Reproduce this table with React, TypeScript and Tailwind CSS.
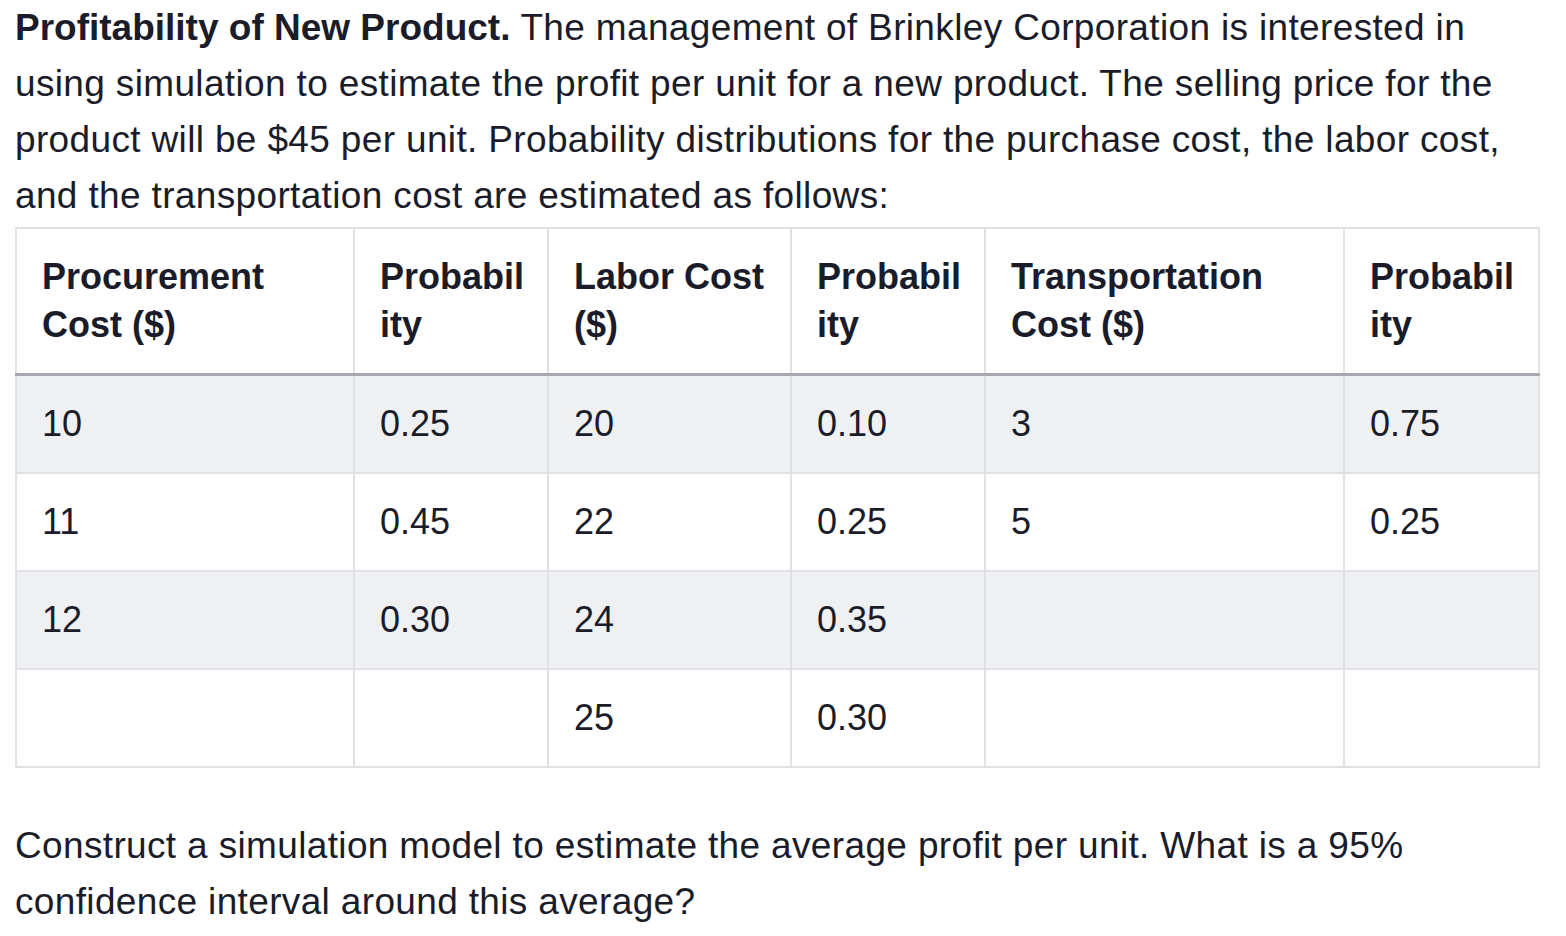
const headers = [
  ["Procurement", "Cost ($)"],
  ["Probabil", "ity"],
  ["Labor Cost", "($)"],
  ["Probabil", "ity"],
  ["Transportation", "Cost ($)"],
  ["Probabil", "ity"],
];

const rows = [
  ["10", "0.25", "20", "0.10", "3", "0.75"],
  ["11", "0.45", "22", "0.25", "5", "0.25"],
  ["12", "0.30", "24", "0.35", "", ""],
  ["", "", "25", "0.30", "", ""],
];

const colWidths = ["w-[338px]", "w-[194px]", "w-[243px]", "w-[194px]", "w-[359px]", "w-[195px]"];

export default function App() {
  return (
    <div className="min-h-screen bg-white px-[15px] text-[#1a1c29] font-['Liberation_Sans',Arial,sans-serif]">
      {/* Intro */}
      <p className="text-[37px] leading-[56px] tracking-[0.35px] w-[1520px]">
        <strong className="font-bold tracking-normal">Profitability of New Product.</strong> The management of
        Brinkley Corporation is interested in using simulation to estimate the profit per unit for a new product.
        The selling price for the product will be $45 per unit. Probability distributions for the purchase cost,
        the labor cost, and the transportation cost are estimated as follows:
      </p>

      {/* Table */}
      <table className="mt-[3px] w-[1523px] table-fixed border-collapse border-2 border-[#dfe1e4] text-[36px] leading-[48px]">
        <colgroup>
          {colWidths.map((w, i) => (
            <col key={i} className={w} />
          ))}
        </colgroup>
        <thead>
          <tr className="border-b-[3px] border-[#a6a9ad]">
            {headers.map((h, i) => (
              <th
                key={i}
                className="border-2 border-b-[3px] border-[#dfe1e4] border-b-[#a6a9ad] px-[25px] py-[24px] text-left align-top font-bold whitespace-nowrap"
              >
                {h[0]}
                <br />
                {h[1]}
              </th>
            ))}
          </tr>
        </thead>
        <tbody>
          {rows.map((row, r) => (
            <tr key={r} className={r % 2 === 0 ? "bg-[#eff0f2]" : "bg-white"}>
              {row.map((cell, c) => (
                <td key={c} className="h-[98px] border-2 border-[#dfe1e4] px-[25px] py-[24px] align-middle">
                  {cell}
                </td>
              ))}
            </tr>
          ))}
        </tbody>
      </table>

      {/* Question */}
      <p className="mt-[50px] text-[37px] leading-[56px] tracking-[0.35px] w-[1520px]">
        Construct a simulation model to estimate the average profit per unit. What is a 95% confidence interval
        around this average?
      </p>
    </div>
  );
}
